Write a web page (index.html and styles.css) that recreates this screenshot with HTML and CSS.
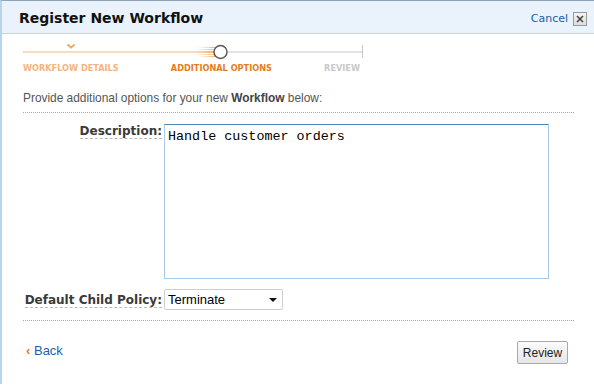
FILE: index.html
```html
<!DOCTYPE html>
<html>
<head>
<meta charset="utf-8">
<link rel="stylesheet" href="styles.css">
</head>
<body>
<div class="modal">
  <div class="header">
    <h1 class="title">Register New Workflow</h1>
    <div class="cancel">
      <a class="cancel-link" href="#">Cancel</a>
      <span class="close-box">
        <svg width="8" height="8" viewBox="0 0 8 8"><path d="M1 1L7 7M7 1L1 7" stroke="#444" stroke-width="1.6"/></svg>
      </span>
    </div>
  </div>
  <div class="body">
    <div class="steps">
      <svg class="track" width="342" height="22" viewBox="0 0 342 22">
        <defs>
          <linearGradient id="glow" x1="0" x2="1" y1="0" y2="0">
            <stop offset="0" stop-color="#f7c48f" stop-opacity="0"/>
            <stop offset="1" stop-color="#f3a45a" stop-opacity="1"/>
          </linearGradient>
        </defs>
        <path d="M44.5 4.5L48 7.5L51.5 4.5" fill="none" stroke="#f0a868" stroke-width="2"/>
        <rect x="0" y="11.5" width="192" height="1" fill="#f2b680"/>
        <g fill="url(#glow)">
          <rect x="174" y="7" width="20" height="1"/>
          <rect x="172" y="9" width="22" height="1"/>
          <rect x="170" y="11" width="24" height="2"/>
          <rect x="172" y="14" width="22" height="1"/>
          <rect x="174" y="16" width="20" height="1"/>
        </g>
        <rect x="204" y="11.5" width="135" height="1" fill="#c8c8c8"/>
        <rect x="339" y="5" width="1" height="13" fill="#c8c8c8"/>
        <circle cx="197.5" cy="12" r="6.5" fill="#fff" stroke="#555" stroke-width="1.4"/>
      </svg>
      <div class="step-labels">
        <span class="step done">WORKFLOW DETAILS</span>
        <span class="step current">ADDITIONAL OPTIONS</span>
        <span class="step todo">REVIEW</span>
      </div>
    </div>
    <p class="intro">Provide additional options for your new <b>Workflow</b> below:</p>
    <div class="form">
      <div class="row">
        <label class="label" for="desc"><span>Description:</span></label>
        <textarea id="desc" class="textarea">Handle customer orders</textarea>
      </div>
      <div class="row row-select">
        <label class="label" for="policy"><span>Default Child Policy:</span></label>
        <div class="select-wrap">
          <select id="policy" class="select"><option>Terminate</option></select>
        </div>
      </div>
    </div>
    <div class="footer">
      <a class="back" href="#"><span class="chev">‹</span> Back</a>
      <button class="btn">Review</button>
    </div>
  </div>
</div>
</body>
</html>
```
FILE: styles.css
```css
html, body {
  margin: 0;
  padding: 0;
  background: #fff;
}
body {
  width: 594px;
  height: 385px;
  overflow: hidden;
  font-family: "Liberation Sans", Arial, sans-serif;
}
.modal {
  border-top: 1px solid #8ea3b8;
  border-left: 2px solid #b6d4ee;
  height: 384px;
  box-sizing: border-box;
}
.header {
  height: 32px;
  background: #eaf3fc;
  border-bottom: 1px solid #bdd7ef;
  display: flex;
  align-items: center;
  justify-content: space-between;
  padding: 0 7px 0 17px;
}
.title {
  margin: 0;
  font-family: "DejaVu Sans", Verdana, sans-serif;
  font-weight: bold;
  font-size: 14px;
  color: #111;
  padding-top: 2px;
}
.cancel {
  display: flex;
  align-items: center;
  gap: 5px;
  padding-top: 3px;
}
.cancel-link {
  font-family: "DejaVu Sans", Verdana, sans-serif;
  font-size: 11px;
  color: #1a5aa8;
  text-decoration: none;
}
.close-box {
  width: 12px;
  height: 12px;
  border: 1px solid #9a9a9a;
  background: linear-gradient(#f4f4f4, #dcdcdc);
  display: flex;
  align-items: center;
  justify-content: center;
}
.body {
  padding: 0 20px 0 21px;
}
.steps {
  width: 342px;
  padding-top: 6px;
}
.track {
  display: block;
}
.step-labels {
  display: flex;
  justify-content: space-between;
  width: 337px;
  margin-top: 0;
}
.step {
  font-family: "DejaVu Sans Condensed", "DejaVu Sans", sans-serif;
  font-weight: bold;
  font-size: 9.1px;
  line-height: 12px;
}
.step.done { color: #f3b57d; }
.step.current { color: #e47d1c; }
.step.todo { color: #c9c9c9; }
.intro {
  margin: 17px 0 0;
  padding: 0 0 6px 0;
  font-size: 11.9px;
  color: #555;
  border-bottom: 1px dotted #a8a8a8;
  line-height: 15px;
}
.intro b { color: #444; }
.form {
  padding: 11px 0 10px;
  border-bottom: 1px dotted #a8a8a8;
}
.row {
  display: flex;
  align-items: flex-start;
}
.row-select {
  margin-top: 10px;
  align-items: center;
}
.label {
  width: 139px;
  text-align: right;
  padding-right: 2px;
  font-family: "DejaVu Sans", Verdana, sans-serif;
  font-weight: bold;
  font-size: 12px;
  color: #3a3a3a;
}
.label span {
  border-bottom: 1px dashed #b8b8b8;
}
.textarea {
  width: 385px;
  height: 155px;
  box-sizing: border-box;
  margin: 0;
  padding: 4px 3px;
  border: 1px solid #a8cbe8;
  border-top-color: #4f85b5;
  resize: none;
  font-family: "Liberation Mono", "Courier New", monospace;
  font-size: 13.4px;
  line-height: 15px;
  color: #000;
  outline: none;
}
.select-wrap {
  position: relative;
  width: 119px;
  height: 21px;
}
.select {
  appearance: none;
  -webkit-appearance: none;
  width: 119px;
  height: 21px;
  box-sizing: border-box;
  margin: 0;
  padding: 0 0 0 3px;
  border: 1px solid #cfcfcf;
  border-radius: 2px;
  background: #fff;
  font-family: "Liberation Sans", Arial, sans-serif;
  font-size: 13px;
  color: #000;
}
.select-wrap::after {
  content: "";
  position: absolute;
  right: 6px;
  top: 9px;
  border-left: 4px solid transparent;
  border-right: 4px solid transparent;
  border-top: 4px solid #111;
}
.footer {
  display: flex;
  justify-content: space-between;
  align-items: flex-start;
  padding: 20px 6px 0 3px;
}
.back {
  margin-top: 2px;
  font-size: 13px;
  line-height: 15px;
  color: #1f5fa8;
  text-decoration: none;
}
.chev {
  color: #e07a12;
  font-weight: bold;
}
.btn {
  width: 51px;
  height: 23px;
  margin: 0;
  padding: 0;
  border: 1px solid #a9a9a9;
  border-radius: 2px;
  background: linear-gradient(#fbfbfb, #e6e6e6);
  font-family: "Liberation Sans", Arial, sans-serif;
  font-size: 12px;
  color: #222;
}
```
